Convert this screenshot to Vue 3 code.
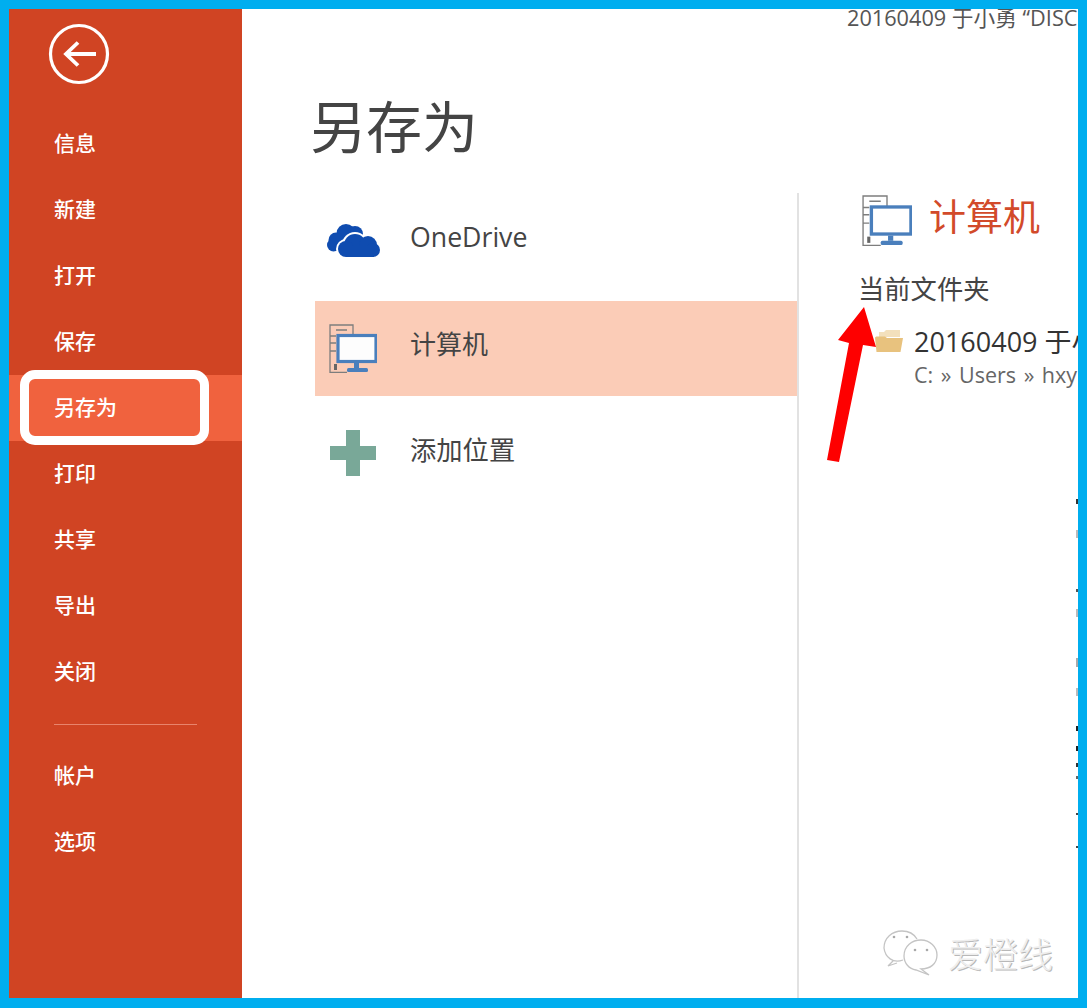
<script setup>
const menuTop = ['信息', '新建', '打开', '保存', '另存为', '打印', '共享', '导出', '关闭']
const menuBottom = ['帐户', '选项']
const specks = [
  { y: 499, h: 5, c: '#333' }, { y: 530, h: 8, c: '#bbb' }, { y: 589, h: 3, c: '#555' },
  { y: 609, h: 8, c: '#bbb' }, { y: 658, h: 9, c: '#aaa' }, { y: 688, h: 8, c: '#bbb' },
  { y: 726, h: 5, c: '#222' }, { y: 746, h: 5, c: '#222' }, { y: 763, h: 4, c: '#333' },
  { y: 776, h: 3, c: '#666' }, { y: 813, h: 2, c: '#444' }, { y: 846, h: 2, c: '#444' }
]
</script>

<template>
  <div class="frame">
    <div class="window">
      <aside class="side">
        <svg class="back" viewBox="0 0 62 62" width="62" height="62" aria-hidden="true">
          <circle cx="31" cy="31" r="28.5" fill="none" stroke="#fff" stroke-width="3.2" />
          <path d="M18 31H48M30 19.5L18 31L30 42.5" fill="none" stroke="#fff" stroke-width="3.8" />
        </svg>
        <nav>
          <div v-for="m in menuTop" :key="m" class="item" :class="{ active: m === '另存为' }">
            <span>{{ m }}</span>
            <i v-if="m === '另存为'" class="ring"></i>
          </div>
          <div class="sep"></div>
          <div v-for="m in menuBottom" :key="m" class="item">{{ m }}</div>
        </nav>
      </aside>

      <main class="left">
        <h1 class="title">另存为</h1>
        <div class="places">
          <div class="place one">
            <svg class="ico cloud" viewBox="0 0 53 34" width="53" height="34" aria-hidden="true">
              <g fill="#0f4cb0">
                <circle cx="19" cy="9.500" r="9.500" /><circle cx="9" cy="16" r="7.500" /><circle cx="6.500" cy="21" r="6.500" />
                <circle cx="28" cy="10" r="8" /><rect x="6" y="15" width="26" height="12" />
              </g>
              <g fill="#fff">
                <circle cx="28" cy="21" r="13" /><circle cx="41" cy="21" r="11" /><circle cx="19" cy="25" r="10" />
                <circle cx="46" cy="26" r="9" />
              </g>
              <g fill="#0f4cb0">
                <circle cx="28" cy="21" r="11" /><circle cx="41" cy="21" r="9" /><circle cx="19" cy="25" r="8" />
                <circle cx="46" cy="26" r="7" /><rect x="19" y="22" width="28" height="11" />
              </g>
            </svg>
            <span class="en">OneDrive</span>
          </div>
          <div class="place sel">
            <svg class="ico" viewBox="0 0 48 49" width="48" height="49" aria-hidden="true">
              <path fill="none" stroke="#7d7d7d" stroke-width="1.300" d="M24 11V1H1V48.500H18M1 12H7M1 19H7M1 27H7M7 6H18" />
              <rect x="5" y="40" width="3" height="6" fill="#666" />
              <rect x="9" y="11.500" width="38" height="26" fill="#fdfdfd" stroke="#4a7fbc" stroke-width="3.200" />
              <rect x="25" y="39" width="5" height="5" fill="#4a7fbc" />
              <rect x="18" y="44" width="21" height="4" rx="1.500" fill="#4a7fbc" />
            </svg>
            <span>计算机</span>
          </div>
          <div class="place add">
            <svg class="ico" viewBox="0 0 46 46" width="46" height="46" aria-hidden="true">
              <path fill="#79a898" d="M16 0H30V16H46V30H30V46H16V30H0V16H16Z" />
            </svg>
            <span>添加位置</span>
          </div>
        </div>
      </main>

      <section class="right">
        <div class="crumb">20160409 于小勇 “DISC</div>
        <div class="pane">
          <div class="head">
            <svg viewBox="0 0 48 49" width="50" height="51" aria-hidden="true">
              <path fill="none" stroke="#7d7d7d" stroke-width="1.300" d="M24 11V1H1V48.500H18M1 12H7M1 19H7M1 27H7M7 6H18" />
              <rect x="5" y="40" width="3" height="6" fill="#666" />
              <rect x="9" y="11.500" width="38" height="26" fill="#fff" stroke="#4a7fbc" stroke-width="3.200" />
              <rect x="25" y="39" width="5" height="5" fill="#4a7fbc" />
              <rect x="18" y="44" width="21" height="4" rx="1.500" fill="#4a7fbc" />
            </svg>
            <span>计算机</span>
          </div>
          <div class="sub">当前文件夹</div>
          <div class="folder">
            <svg viewBox="0 0 28 24" width="28" height="24" aria-hidden="true">
              <path fill="#f3e0bc" d="M4 9V4H9L11 2H25V9Z" />
              <path fill="#e8c27e" d="M0 10C0 9 1 8.500 2 8.500H10L12 10H28L25.500 24H1.500Z" />
            </svg>
            <div class="finfo">
              <div class="fname">20160409 于小勇</div>
              <div class="fpath">C: » Users » hxyu</div>
            </div>
          </div>
        </div>
      </section>
    </div>

    <svg class="arrow" viewBox="0 0 60 160" width="60" height="160" aria-hidden="true">
      <polygon fill="#fe0000" points="44,2 56,42 43,40 19,157 7,155 29,38 18,35" />
    </svg>

    <i v-for="s in specks" :key="s.y" class="speck" :style="{ top: s.y + 'px', height: s.h + 'px', background: s.c }"></i>

    <div class="mark">
      <svg viewBox="0 0 56 46" width="56" height="46" aria-hidden="true">
        <g fill="none" stroke="#c4c4c4" stroke-width="1.300">
          <path d="M20 30C10 34 2 27 1 18C1 8 9 1 19 1C26 1 31 4 34 9M10 31L5 36L14 33" />
          <path d="M21 26C21 16 29 10 38 10C47 10 54 17 54 25C54 34 47 39 38 39L46 45L33 40C26 39 21 33 21 26Z" />
        </g>
        <g fill="#a8a8a8">
          <circle cx="11" cy="7" r="1.300" /><circle cx="24" cy="7" r="1.300" />
          <circle cx="32" cy="20" r="1.300" /><circle cx="44" cy="20" r="1.300" />
        </g>
      </svg>
      <span>爱橙线</span>
    </div>
  </div>
</template>

<style>
html, body { margin: 0; background: #00aeef; }
</style>

<style scoped>
.frame {
  position: relative;
  width: 1087px;
  height: 1008px;
  box-sizing: border-box;
  padding: 9px 9px 10px 9px;
  background: #00aeef;
  overflow: hidden;
  font-family: "Open Sans", "Noto Sans CJK SC", sans-serif;
}
.window {
  display: flex;
  height: 100%;
  background: #fff;
  overflow: hidden;
}
.side {
  flex: 0 0 233px;
  background: #d04423;
  color: #fff;
  font-size: 21px;
  font-weight: 500;
  font-family: "Noto Sans CJK SC", sans-serif;
}
.back { display: block; margin: 14px 0 26px 39px; }
.item {
  position: relative;
  height: 66px;
  line-height: 62px;
  padding-left: 45px;
}
.item.active { background: #f0623e; }
.ring {
  position: absolute;
  left: 11px;
  top: -5px;
  width: 171px;
  height: 57px;
  border: 9px solid #fff;
  border-radius: 15px;
}
.sep {
  height: 1px;
  margin: 19px 45px 18px;
  width: 143px;
  background: #e8846c;
}
.left {
  flex: 0 0 555px;
  color: #444;
  font-family: "Noto Sans CJK SC", sans-serif;
}
.title {
  margin: 77px 0 0 68px;
  font-size: 56px;
  font-weight: 400;
  line-height: 76px;
  color: #444;
}
.places { margin: 29px 0 0 73px; }
.place {
  display: flex;
  align-items: center;
  font-size: 26px;
  color: #444;
}
.ico { margin-left: 12px; flex: none; }
.one { height: 92px; margin-bottom: 18px; }
.cloud { margin-left: 12px; margin-top: 8px; }
.one span { margin-left: 30px; margin-top: -2px; }
.en { font-family: "Open Sans", sans-serif; font-size: 26.700px; }
.sel { height: 95px; background: #fbccb7; }
.sel .ico { margin-left: 14px; }
.sel span { margin-left: 33px; margin-top: -13px; }
.add { height: 108px; font-size: 26.300px; }
.add .ico { margin-left: 15px; margin-top: 6px; }
.add span { margin-left: 34px; margin-top: -4px; }
.right {
  flex: 1;
  min-width: 0;
  display: flex;
  flex-direction: column;
  overflow: hidden;
}
.crumb {
  height: 184px;
  padding-left: 50px;
  flex: none;
  font-size: 21.700px;
  line-height: 17px;
  white-space: nowrap;
  color: #555;
  overflow: hidden;
}
.pane {
  flex: 1;
  border-left: 2px solid #e2e2e2;
  padding: 2px 0 0 63px;
  white-space: nowrap;
}
.head {
  display: flex;
  align-items: center;
  height: 50px;
  color: #d24a2a;
  font-size: 37px;
  font-family: "Noto Sans CJK SC", sans-serif;
}
.head span { margin: -11px 0 0 17px; }
.sub {
  margin: 24px 0 0 -4px;
  font-size: 26.300px;
  line-height: 38px;
  color: #444;
  font-family: "Noto Sans CJK SC", sans-serif;
}
.folder {
  display: flex;
  margin: 14px 0 0 13px;
}
.folder svg { margin-top: 7px; flex: none; }
.finfo { margin-left: 11px; padding-top: 3px; }
.fname { font-size: 27px; line-height: 36px; color: #333; }
.fpath { font-size: 21.500px; line-height: 29px; color: #666; word-spacing: 2px; }
.arrow { position: absolute; left: 820px; top: 305px; }
.speck { position: absolute; left: 1076px; width: 2px; }
.mark {
  position: absolute;
  left: 883px;
  top: 930px;
  display: flex;
  align-items: center;
  gap: 9px;
  font-size: 35px;
  line-height: 46px;
  color: #eeeeee;
  text-shadow: 1px 1px 0 #b8b8b8;
  font-family: "Noto Sans CJK SC", sans-serif;
  font-weight: 300;
}
</style>
